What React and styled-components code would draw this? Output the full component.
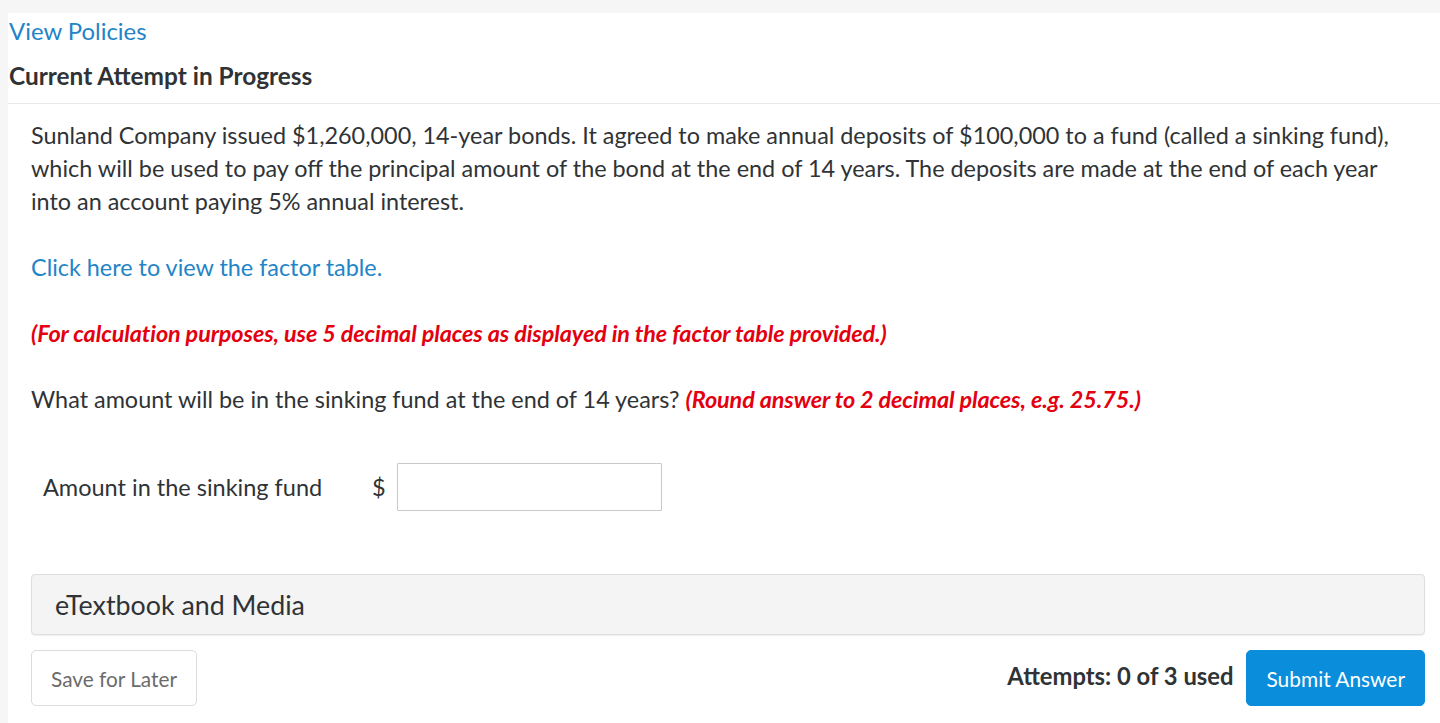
import React from "react";
import styled, { createGlobalStyle } from "styled-components";

const Global = createGlobalStyle`
  html, body { margin: 0; padding: 0; background: #f6f6f6; }
  body { font-family: Lato, "Open Sans", sans-serif; color: #2f3336; }
`;

const Page = styled.div`
  margin: 13px 0 0 8px;
  background: #fff;
  min-height: 710px;
`;

const TopLink = styled.a`
  display: block;
  padding: 3px 0 0 1px;
  font-size: 23.9px;
  line-height: 30px;
  color: #2384c6;
  text-decoration: none;
`;

const Heading = styled.h2`
  margin: 0;
  padding: 15px 0 12px 1px;
  font-size: 24.4px;
  line-height: 30px;
  font-weight: 700;
  color: #2f3336;
  border-bottom: 1px solid #e9e9e9;
`;

const Body = styled.div`
  padding: 15px 15px 0 23px;
`;

const Para = styled.p`
  margin: 0 0 33px;
  padding-right: 30px;
  font-size: 23.4px;
  line-height: 33px;
  color: #2f3336;
`;

const FactorLink = styled.a`
  color: #2384c6;
  text-decoration: none;
`;

const Red = styled.span`
  color: #e3000f;
  font-style: italic;
  font-weight: 700;
  letter-spacing: -0.1px;
`;

const AnswerRow = styled.div`
  display: flex;
  align-items: center;
  padding: 14px 0 0 12px;
  height: 48px;
  margin-bottom: 63px;
`;

const Label = styled.span`
  font-size: 23.5px;
  color: #2f3336;
  width: 329px;
`;

const Dollar = styled.span`
  font-size: 23.5px;
  color: #2f3336;
  margin-right: 11px;
`;

const Input = styled.input`
  width: 265px;
  height: 48px;
  box-sizing: border-box;
  border: 1px solid #c9c9c9;
  border-radius: 1px;
  font-family: inherit;
  font-size: 20px;
  padding: 0 10px;
  outline: none;
`;

const Media = styled.div`
  height: 61px;
  box-sizing: border-box;
  background: #f4f4f4;
  border: 1px solid #dedede;
  border-radius: 4px;
  box-shadow: 0 1px 1px rgba(0,0,0,0.06);
  display: flex;
  align-items: center;
  padding: 0 0 0 23px;
  font-size: 26.8px;
  color: #2f3336;
`;

const Footer = styled.div`
  display: flex;
  align-items: center;
  margin-top: 15px;
`;

const Button = styled.button`
  height: 56px;
  box-sizing: border-box;
  border-radius: 5px;
  font-family: inherit;
  font-size: ${p => (p.primary ? "20.9px" : "20.8px")};
  padding: 0 19px;
  cursor: pointer;
  border: 1px solid ${p => (p.primary ? "#0a8ddb" : "#dcdcdc")};
  background: ${p => (p.primary ? "#0a8ddb" : "#fff")};
  color: ${p => (p.primary ? "#fff" : "#6b6b6b")};
`;

const Spacer = styled.div`
  flex: 1;
`;

const Attempts = styled.span`
  font-size: 23.8px;
  font-weight: 700;
  color: #2f3336;
  margin: 0 13px 4px 0;
`;

export default function App() {
  return (
    <>
      <Global />
      <Page>
        <TopLink href="#">View Policies</TopLink>
        <Heading>Current Attempt in Progress</Heading>
        <Body>
          <Para>
            Sunland Company issued $1,260,000, 14-year bonds. It agreed to make annual deposits of $100,000 to a fund (called a sinking fund), which will be used to pay off the principal amount of the bond at the end of 14 years. The deposits are made at the end of each year into an account paying 5% annual interest.
          </Para>
          <Para>
            <FactorLink href="#">Click here to view the factor table.</FactorLink>
          </Para>
          <Para>
            <Red>(For calculation purposes, use 5 decimal places as displayed in the factor table provided.)</Red>
          </Para>
          <Para>
            What amount will be in the sinking fund at the end of 14 years? <Red>(Round answer to 2 decimal places, e.g. 25.75.)</Red>
          </Para>
          <AnswerRow>
            <Label>Amount in the sinking fund</Label>
            <Dollar>$</Dollar>
            <Input type="text" />
          </AnswerRow>
          <Media>eTextbook and Media</Media>
          <Footer>
            <Button>Save for Later</Button>
            <Spacer />
            <Attempts>Attempts: 0 of 3 used</Attempts>
            <Button primary>Submit Answer</Button>
          </Footer>
        </Body>
      </Page>
    </>
  );
}
